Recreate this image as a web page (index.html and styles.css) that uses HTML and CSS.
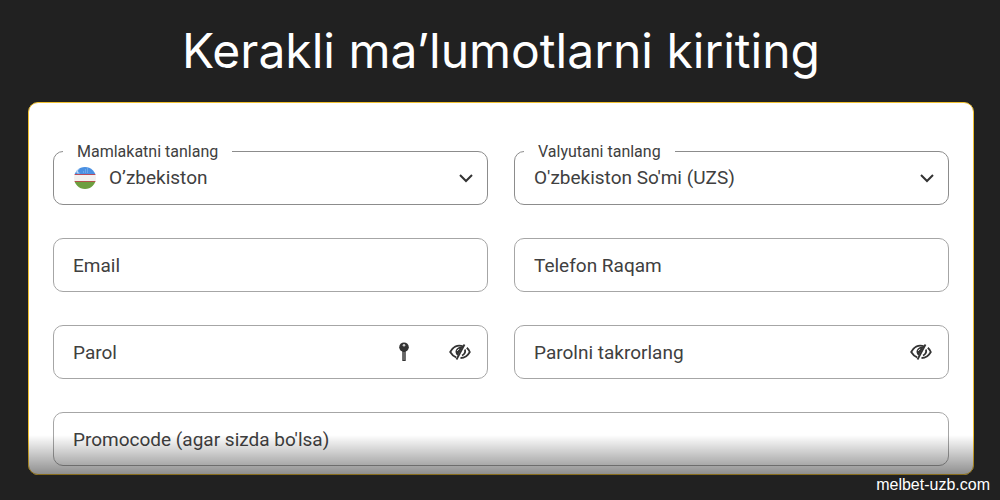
FILE: index.html
```html
<!DOCTYPE html>
<html lang="uz">
<head>
    <meta charset="UTF-8">
    <meta name="viewport" content="width=device-width, initial-scale=1.0">
    <title>Kerakli ma’lumotlarni kiriting</title>
    <link rel="stylesheet" href="styles.css">
</head>
<body>
    <h1>Kerakli ma’lumotlarni kiriting</h1>

    <form class="card">
        <div class="field">
            <label class="field-label" for="country">Mamlakatni tanlang</label>
            <svg class="flag" viewBox="0 0 24 24" aria-hidden="true">
                <defs>
                    <clipPath id="flagClip"><circle cx="12" cy="12" r="11"/></clipPath>
                </defs>
                <g clip-path="url(#flagClip)">
                    <rect width="24" height="8" fill="#4a90e2"/>
                    <rect y="8" width="24" height="8" fill="#f3f1ef"/>
                    <rect y="16" width="24" height="8" fill="#6d9f3f"/>
                    <rect y="8" width="24" height="1" fill="#b84b5c"/>
                    <rect y="15" width="24" height="1" fill="#b3524a"/>
                    <path d="M7 3a2.500 2.500 0 1 0 0 4a2 2 0 1 1 0-4z" fill="#b9d6f6"/>
                    <path d="M10 6h1M12 4h1M12 6h1M14 2h1M14 4h1M14 6h1" stroke="#8dbcf0"/>
                </g>
            </svg>
            <select class="control select with-flag" id="country">
                <option>O’zbekiston</option>
            </select>
            <svg class="chevron" viewBox="0 0 16 16" aria-hidden="true"><path d="M2 5l6 6 6-6"/></svg>
        </div>

        <div class="field">
            <label class="field-label" for="currency">Valyutani tanlang</label>
            <select class="control select" id="currency">
                <option>O'zbekiston So'mi (UZS)</option>
            </select>
            <svg class="chevron" viewBox="0 0 16 16" aria-hidden="true"><path d="M2 5l6 6 6-6"/></svg>
        </div>

        <div class="field">
            <input class="control" type="email" placeholder="Email" aria-label="Email">
        </div>

        <div class="field">
            <input class="control" type="tel" placeholder="Telefon Raqam" aria-label="Telefon Raqam">
        </div>

        <div class="field">
            <input class="control" type="password" placeholder="Parol" aria-label="Parol">
            <div class="tools">
                <button class="icon-btn" type="button" aria-label="Parol yaratish">
                    <svg viewBox="0 0 24 24">
                        <path d="M12 10v11" stroke="#333" stroke-width="3.400"/>
                        <path d="M12 12v8" stroke="#999" stroke-width="1"/>
                        <circle cx="12" cy="7.200" r="4.800" fill="#333"/>
                        <circle cx="12" cy="5.200" r="1.300" fill="#ccc"/>
                    </svg>
                </button>
                <button class="icon-btn" type="button" aria-label="Parolni ko'rsatish">
                    <svg viewBox="0 0 24 24">
                        <path d="M15.500 6.500C9 3.800 4.500 7.500 2.200 12c1.500 2.600 3.400 4.400 6 5.300" class="line"/>
                        <path d="M15 6.500C10 6 7 9.500 7.600 12.500c.3 1.500 1 2.500 2 3.200z" fill="#333"/>
                        <path d="M9.300 11c.2-1 .9-1.700 1.900-1.900" stroke="#ddd" fill="none"/>
                        <path d="M16.500 4.500L8.500 19.500" class="line"/>
                        <path d="M18.800 7.800c1.300 1.100 2.300 2.500 3 4.200-2 3.700-5.200 6-9.300 6" class="line"/>
                        <path d="M17 9.500c.5 2.500-.8 5-3 6" class="line"/>
                    </svg>
                </button>
            </div>
        </div>

        <div class="field">
            <input class="control" type="password" placeholder="Parolni takrorlang" aria-label="Parolni takrorlang">
            <div class="tools">
                <button class="icon-btn" type="button" aria-label="Parolni ko'rsatish">
                    <svg viewBox="0 0 24 24">
                        <path d="M15.500 6.500C9 3.800 4.500 7.500 2.200 12c1.500 2.600 3.400 4.400 6 5.300" class="line"/>
                        <path d="M15 6.500C10 6 7 9.500 7.600 12.500c.3 1.500 1 2.500 2 3.200z" fill="#333"/>
                        <path d="M9.300 11c.2-1 .9-1.700 1.900-1.900" stroke="#ddd" fill="none"/>
                        <path d="M16.500 4.500L8.500 19.500" class="line"/>
                        <path d="M18.800 7.800c1.300 1.100 2.300 2.500 3 4.200-2 3.700-5.200 6-9.300 6" class="line"/>
                        <path d="M17 9.500c.5 2.500-.8 5-3 6" class="line"/>
                    </svg>
                </button>
            </div>
        </div>

        <div class="field wide">
            <input class="control" type="text" placeholder="Promocode (agar sizda bo'lsa)" aria-label="Promocode (agar sizda bo'lsa)">
        </div>
    </form>

    <footer class="site">melbet-uzb.com</footer>
</body>
</html>
```
FILE: styles.css
```css
* {
    box-sizing: border-box;
}

body {
    margin: 0;
    padding: 21px 26px 0 28px;
    background: #212121;
    font-family: Roboto, "Liberation Sans", sans-serif;
}

h1 {
    margin: 0 0 21px;
    color: #fff;
    font-family: Inter, "Liberation Sans", sans-serif;
    font-size: 48px;
    font-weight: 400;
    line-height: 60px;
    text-align: center;
}

.card {
    position: relative;
    display: grid;
    grid-template-columns: 1fr 1fr;
    gap: 33px 26px;
    padding: 48px 24px 8px 24px;
    background: #fff;
    border: 1px solid #f0c030;
    border-radius: 10px;
}

/* shade over the bottom of the form */
.card::after {
    content: "";
    position: absolute;
    left: -1px;
    right: -1px;
    bottom: -1px;
    height: 40px;
    border-radius: 0 0 10px 10px;
    background: linear-gradient(rgba(0,0,0,0), rgba(0,0,0,0.45));
    pointer-events: none;
}

.field {
    position: relative;
}

.wide {
    grid-column: 1 / -1;
}

.control {
    display: block;
    width: 100%;
    height: 54px;
    padding: 0 19px;
    background: #fff;
    border: 1px solid #a6a6a6;
    border-radius: 10px;
    color: #404040;
    font-family: inherit;
    font-size: 19px;
    outline: none;
}

.control::placeholder {
    color: #404040;
    opacity: 1;
}

.select {
    padding-bottom: 2px;
    appearance: none;
    border-color: #8c8c8c;
}

.with-flag {
    padding-left: 55px;
}

.field-label {
    position: absolute;
    top: -9px;
    left: 10px;
    padding: 0 14px;
    background: #fff;
    color: #404040;
    font-size: 16px;
    line-height: 20px;
}

.flag {
    position: absolute;
    top: 15px;
    left: 20px;
    width: 24px;
    height: 24px;
}

.chevron {
    position: absolute;
    top: 19px;
    right: 14px;
    width: 16px;
    height: 16px;
    fill: none;
    stroke: #333;
    stroke-width: 2;
    pointer-events: none;
}

.tools {
    position: absolute;
    top: 0;
    bottom: 0;
    right: 16px;
    display: flex;
    align-items: center;
    gap: 32px;
}

.icon-btn {
    width: 24px;
    height: 24px;
    padding: 0;
    background: none;
    border: none;
    cursor: pointer;
}

.icon-btn svg {
    display: block;
}

.line {
    fill: none;
    stroke: #333;
    stroke-width: 1.8;
}

.site {
    margin-right: -16px;
    color: #fff;
    font-family: "Liberation Sans", sans-serif;
    font-size: 16px;
    line-height: 20px;
    text-align: right;
}
```
